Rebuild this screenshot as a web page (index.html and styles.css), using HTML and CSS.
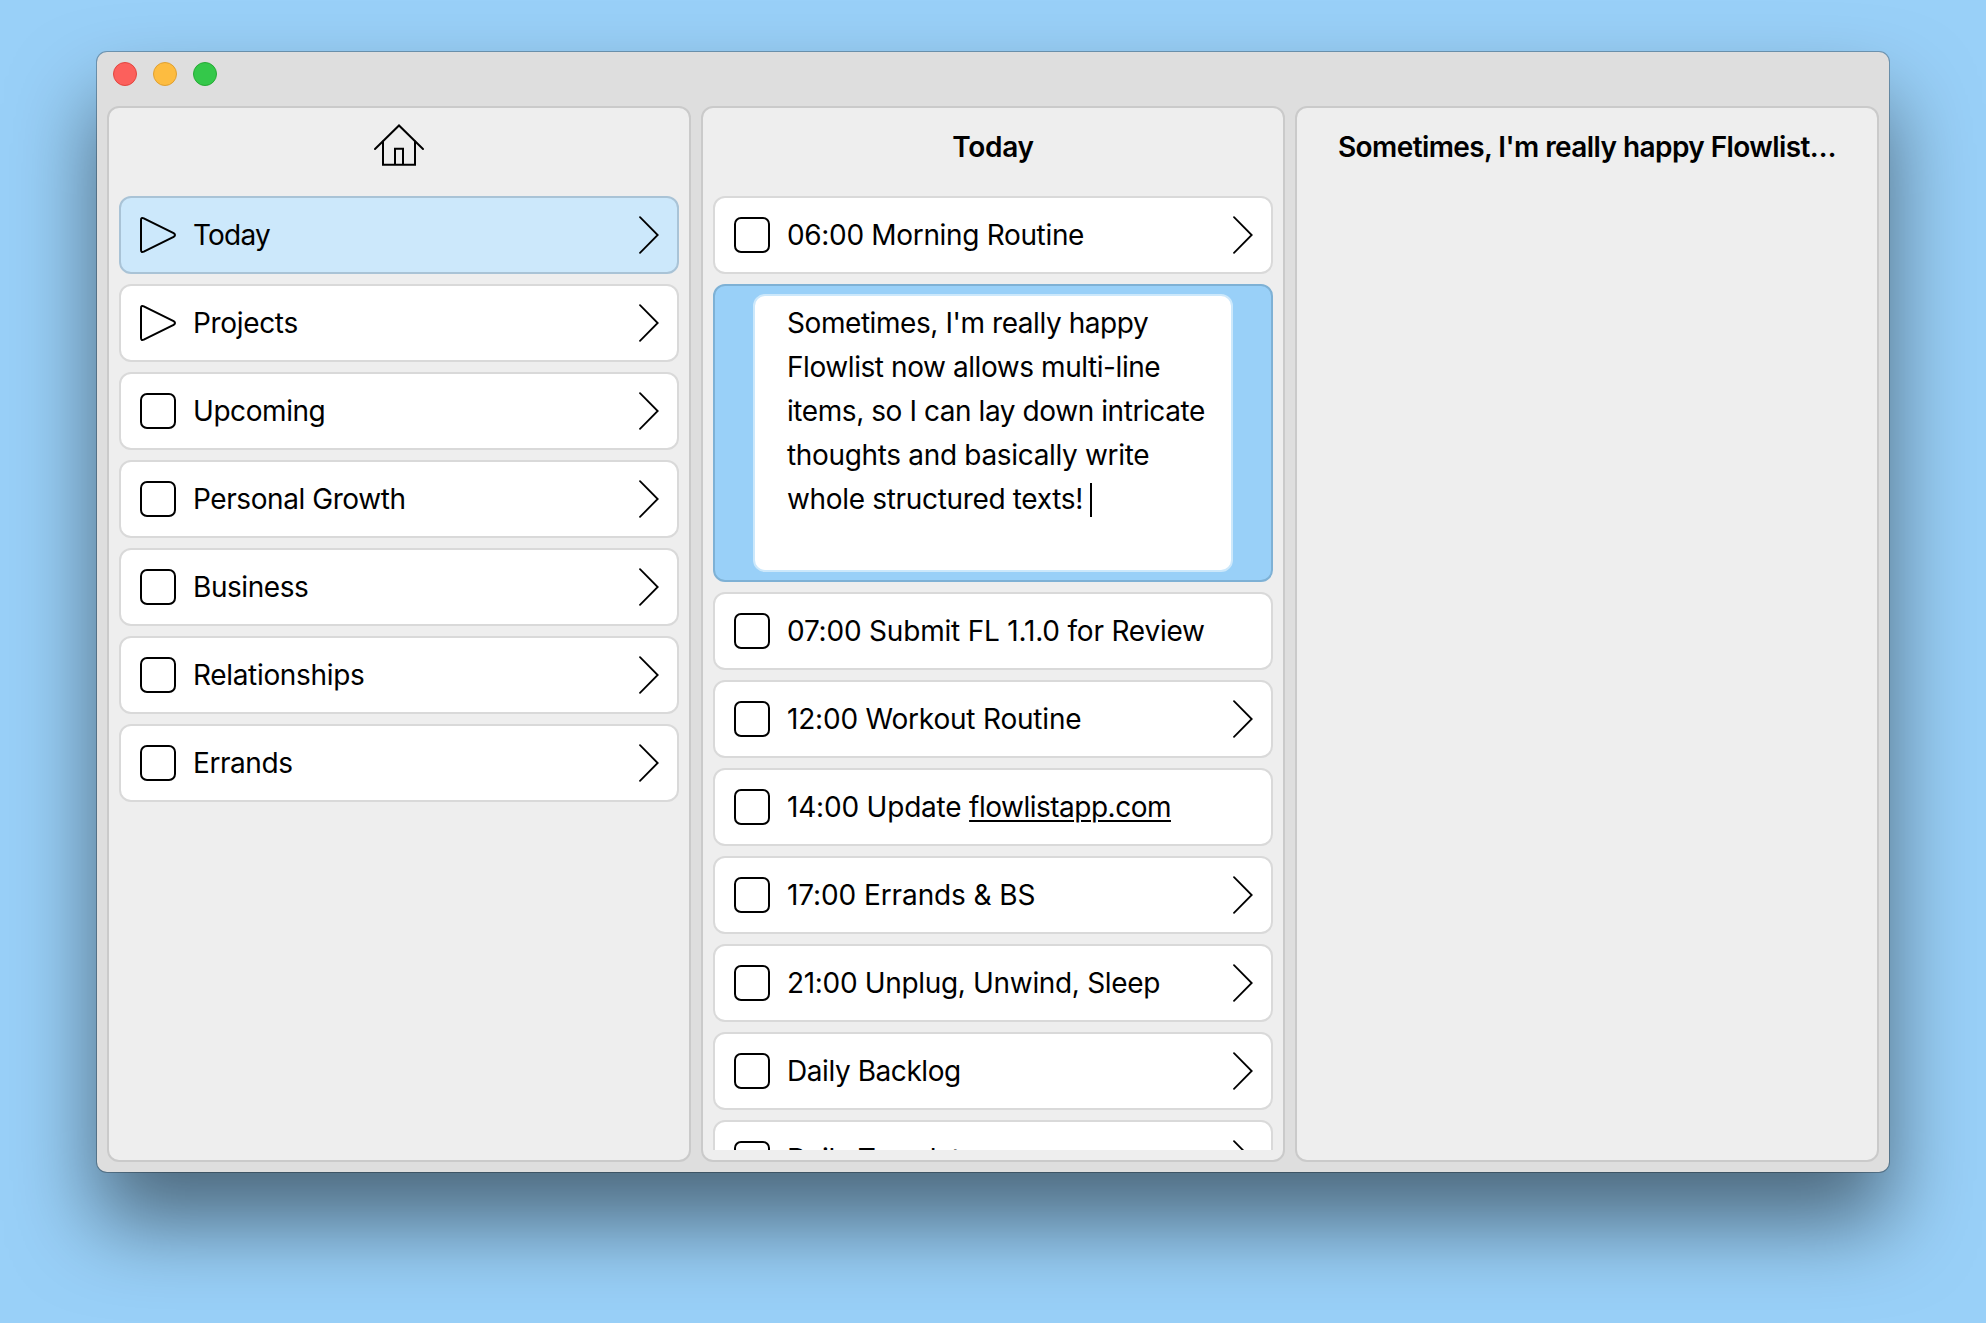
FILE: index.html
```html
<!DOCTYPE html>
<html lang="en">
<head>
<meta charset="utf-8">
<title>Flowlist</title>
<link rel="stylesheet" href="styles.css">
</head>
<body>
<svg class="defs" width="0" height="0" aria-hidden="true">
  <symbol id="box" viewBox="0 0 36 36"><rect x="1" y="1" width="34" height="34" rx="6"/></symbol>
  <symbol id="play" viewBox="0 0 36 36"><path d="M1 3.2V32.8Q1 35.9 3.8 34.6L33.6 19.9Q36.400 18 33.600 16.100L3.800 1.400Q1 .1 1 3.200Z"/></symbol>
  <symbol id="chevron" viewBox="0 0 20 38"><path d="M1 1.200L18.700 19L1 36.800"/></symbol>
</svg>
<main class="window">
  <div class="titlebar">
    <span class="light close"></span><span class="light minimize"></span><span class="light zoom"></span>
  </div>
  <div class="columns">
    <section class="column">
      <header class="head">
        <svg class="home" width="52" height="44" viewBox="0 0 52 44"><path d="M2 26L26 2.500L50 26"/><path d="M10 18.500V41.800H42V18.500M22 41.800V25.700H30V41.800"/></svg>
      </header>
      <div class="list">
        <div class="item selected"><svg class="mark"><use href="#play"/></svg><span class="text">Today</span><svg class="go"><use href="#chevron"/></svg></div>
        <div class="item"><svg class="mark"><use href="#play"/></svg><span class="text loose">Projects</span><svg class="go"><use href="#chevron"/></svg></div>
        <div class="item"><svg class="mark"><use href="#box"/></svg><span class="text">Upcoming</span><svg class="go"><use href="#chevron"/></svg></div>
        <div class="item"><svg class="mark"><use href="#box"/></svg><span class="text">Personal Growth</span><svg class="go"><use href="#chevron"/></svg></div>
        <div class="item"><svg class="mark"><use href="#box"/></svg><span class="text">Business</span><svg class="go"><use href="#chevron"/></svg></div>
        <div class="item"><svg class="mark"><use href="#box"/></svg><span class="text loose">Relationships</span><svg class="go"><use href="#chevron"/></svg></div>
        <div class="item"><svg class="mark"><use href="#box"/></svg><span class="text">Errands</span><svg class="go"><use href="#chevron"/></svg></div>
      </div>
    </section>
    <section class="column">
      <header class="head"><h2 class="title">Today</h2></header>
      <div class="list">
        <div class="item"><svg class="mark"><use href="#box"/></svg><span class="text loose">06:00 Morning Routine</span><svg class="go"><use href="#chevron"/></svg></div>
        <div class="item editing">
          <div class="editor">Sometimes, I'm really happy<br>Flowlist now allows multi-line<br>items, so I can lay down intricate<br><span class="loose">thoughts and basically write</span><br><span class="loose">whole structured texts!</span><span class="caret"></span></div>
        </div>
        <div class="item"><svg class="mark"><use href="#box"/></svg><span class="text timed">07:00 Submit FL 1.1.0 for Review</span></div>
        <div class="item"><svg class="mark"><use href="#box"/></svg><span class="text timed">12:00 Workout Routine</span><svg class="go"><use href="#chevron"/></svg></div>
        <div class="item"><svg class="mark"><use href="#box"/></svg><span class="text timed">14:00 Update <span class="link">flowlistapp.com</span></span></div>
        <div class="item"><svg class="mark"><use href="#box"/></svg><span class="text timed wide">17:00 Errands &amp; BS</span><svg class="go"><use href="#chevron"/></svg></div>
        <div class="item"><svg class="mark"><use href="#box"/></svg><span class="text loose">21:00 Unplug, Unwind, Sleep</span><svg class="go"><use href="#chevron"/></svg></div>
        <div class="item"><svg class="mark"><use href="#box"/></svg><span class="text">Daily Backlog</span><svg class="go"><use href="#chevron"/></svg></div>
        <div class="item"><svg class="mark"><use href="#box"/></svg><span class="text">Daily Template</span><svg class="go"><use href="#chevron"/></svg></div>
      </div>
    </section>
    <section class="column">
      <header class="head"><h2 class="title long">Sometimes, I'm really happy Flowlist…</h2></header>
    </section>
  </div>
</main>
</body>
</html>
```

FILE: styles.css
```css
* { box-sizing: border-box; }

body {
  margin: 0;
  height: 1323px;
  padding: 52px 97px 0;
  overflow: hidden;
  background: #99d0f8;
  color: #000;
  font: 400 28px/44px Inter, "Liberation Sans", sans-serif;
  letter-spacing: -0.43px;
}

.defs { position: absolute; }

.window {
  display: flex;
  flex-direction: column;
  width: 1792px;
  height: 1120px;
  padding: 0 10px 10px;
  border-radius: 10px;
  background: #dedede;
  box-shadow: 0 0 0 1px rgba(0, 0, 0, .27), 0 50px 84px rgba(0, 0, 0, .5);
}

.titlebar {
  display: flex;
  gap: 16px;
  height: 54px;
  padding: 10px 6px;
}

.light {
  width: 24px;
  height: 24px;
  border: 1px solid #e2463f;
  border-radius: 50%;
  background: #fc605c;
}
.minimize { background: #fdbc40; border-color: #dfa032; }
.zoom { background: #34c84a; border-color: #27aa35; }

.columns {
  display: grid;
  grid-template-columns: repeat(3, minmax(0, 1fr));
  gap: 10px;
  flex: 1;
  min-height: 0;
}

.column {
  display: flex;
  flex-direction: column;
  min-height: 0;
  padding: 0 10px 10px;
  border: 2px solid #cacaca;
  border-radius: 12px;
  background: #eee;
}

.head {
  display: flex;
  justify-content: center;
  flex: none;
  height: 88px;
  padding-top: 15px;
}

.title {
  margin: 0;
  font-size: 28px;
  font-weight: 600;
  line-height: 48px;
  letter-spacing: -0.3px;
  white-space: nowrap;
}
.long { letter-spacing: -0.58px; }

.home, .mark, .go {
  flex: none;
  fill: none;
  stroke: #000;
  stroke-width: 2;
  stroke-linecap: round;
}

.list {
  display: flex;
  flex-direction: column;
  gap: 10px;
  flex: 1;
  min-height: 0;
  overflow: hidden;
}

.item {
  display: flex;
  align-items: center;
  flex: none;
  height: 78px;
  padding: 0 18px 0 19px;
  border: 2px solid #d9d9d9;
  border-radius: 12px;
  background: #fff;
}
.selected { background: #cce8fb; border-color: #a9c3d6; letter-spacing: -0.8px; }

.mark { width: 36px; height: 36px; }
.text { flex: 1; margin-left: 17px; white-space: nowrap; }
.go { width: 20px; height: 38px; stroke-width: 1.8; }

.loose { letter-spacing: -0.33px; }
.timed { letter-spacing: -0.2px; }
.wide { letter-spacing: -0.1px; }

.link {
  letter-spacing: -0.5px;
  text-decoration: underline;
  text-decoration-thickness: 2px;
  text-underline-offset: 3px;
}

.editing {
  height: 298px;
  padding: 8px 38px;
  border-color: #7eb1d5;
  background: #99d0f8;
}

.editor {
  width: 480px;
  height: 278px;
  padding: 5px 0 0 32px;
  border: 2px solid #cce8fb;
  border-radius: 12px;
  background: #fff;
  white-space: nowrap;
}

.caret {
  display: inline-block;
  width: 2px;
  height: 34px;
  margin-left: 7px;
  vertical-align: -8px;
  background: #000;
}
```
